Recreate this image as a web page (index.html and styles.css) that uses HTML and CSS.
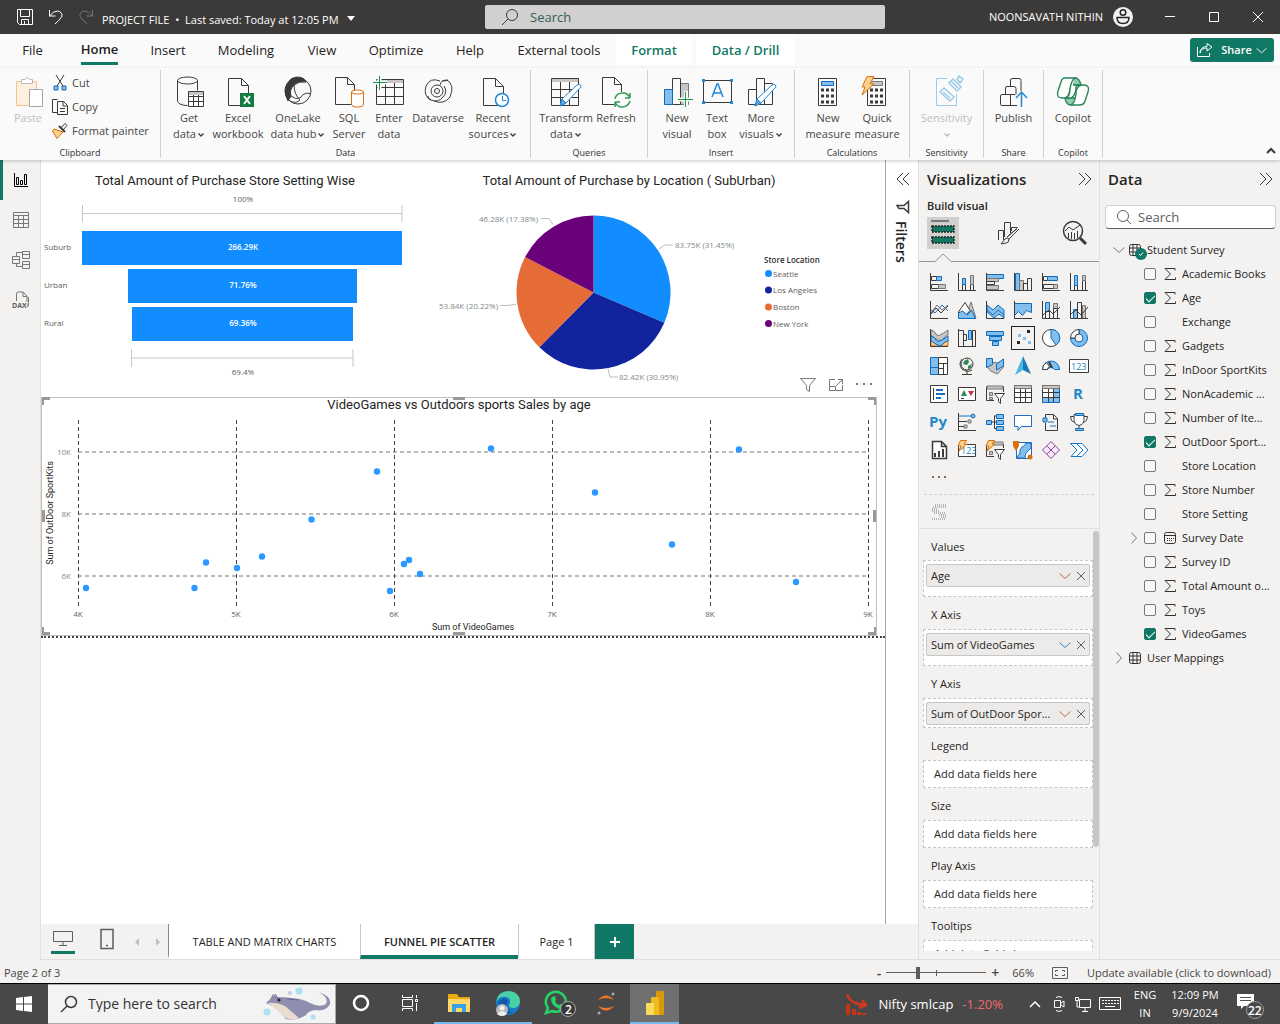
FILE: index.html
```html
<!DOCTYPE html>
<html lang="en">
<head>
<meta charset="utf-8">
<meta name="viewport" content="width=device-width, initial-scale=1">
<title>PROJECT FILE</title>
<link rel="stylesheet" href="styles.css">
</head>
<body>
<svg class="defs" aria-hidden="true">
  <symbol id="sigma" viewBox="0 0 12 12"><path d="M11 2.500V.5H1l5.500 5.500L1 11.500h10.500V9.500"/></symbol>
  <symbol id="table" viewBox="0 0 12 12"><rect x=".5" y=".5" width="11" height="11" rx="2"/><path d="M.5 4h11M.5 8h11M4 .5v11M8 .5v11"/></symbol>
  <symbol id="down" viewBox="0 0 12 12"><path d="M.5 3.500l5.500 5 5.500-5"/></symbol>
  <symbol id="right" viewBox="0 0 12 12"><path d="M3.500.5l5 5.500-5 5.500"/></symbol>
  <symbol id="close" viewBox="0 0 12 12"><path d="M2 2l8 8M10 2l-8 8"/></symbol>
  <symbol id="caret" viewBox="0 0 8 8"><path d="M1.500 2.500L4 5l2.500-2.500"/></symbol>
  <symbol id="axis" viewBox="0 0 20 20"><path d="M1.500 1v17.500H19"/></symbol>
  <symbol id="bolt" viewBox="0 0 20 20"><path d="M3.500.5h6L7 4h3L2 11l2-5H1z"/></symbol>
  <symbol id="page" viewBox="0 0 32 32"><path d="M2.500 2.500h12l7 7v20h-19zM14.500 2.500v7h7"/></symbol>
  <symbol id="pencil" viewBox="0 0 32 32"><path d="M12 24L27 10q3-2 4 1 0 1-1 2L16 28l-6 3z"/><path d="M10 31l2-7 4 4z" class="solid"/></symbol>
</svg>

<header class="titlebar">
  <div class="title-left">
    <svg width="16" height="16" class="lt"><path d="M.5.5h15v15h-13l-2-2zM3.500.5v7h9v-7M4.500 15.500v-5h7v5M7.500 12v3"/></svg>
    <svg width="14" height="16" class="lt"><path d="M.5 1v6h6M.5 7q4-5 8-5 5 1 4.500 5-.5 2-7 8"/></svg>
    <svg width="14" height="16" class="dim"><path d="M13.500 1v6h-6M13.500 7q-4-5-8-5-5 1-4.500 5 .5 2 7 8"/></svg>
    <button class="file-name">PROJECT FILE&nbsp; • &nbsp;Last saved: Today at 12:05 PM <i class="tri"></i></button>
  </div>
  <label class="title-search"><svg width="18" height="18" class="dk"><circle cx="11" cy="7" r="5.500"/><path d="M7 11L1 17"/></svg><input type="text" placeholder="Search" aria-label="Search"></label>
  <div class="title-right">
    <span class="user">NOONSAVATH NITHIN</span>
    <svg class="avatar" width="20" height="20"><circle cx="10" cy="10" r="10" fill="#f3f2f1"/><circle cx="10" cy="5.500" r="2.800"/><path d="M4 10.500h12q0 6-6 6t-6-6z"/></svg>
    <button class="win" aria-label="Minimize"><svg width="12" height="12" class="lt"><path d="M1 5.500h10"/></svg></button>
    <button class="win" aria-label="Maximize"><svg width="12" height="12" class="lt"><path d="M1.500 1.500h9v9h-9z"/></svg></button>
    <button class="win" aria-label="Close"><svg width="12" height="12" class="lt"><path d="M1 1l10 10M11 1L1 11"/></svg></button>
  </div>
</header>

<nav class="menu">
  <div class="menu-tabs">
    <button>File</button><button class="on"><span>Home</span></button><button>Insert</button><button>Modeling</button><button>View</button><button>Optimize</button><button>Help</button><button>External tools</button><button class="ctx">Format</button><button class="ctx">Data / Drill</button>
  </div>
  <button class="share"><svg width="16" height="14" class="lt"><path d="M.5 4v9.500h12V10M3 10q1-5 7-5V8l5-4-5-3.500v3Q3 4 3 10z"/></svg>Share<svg width="11" height="11" class="lt"><use href="#down"/></svg></button>
</nav>

<div class="ribbon">
  <section class="group g-clip">
    <div class="tools">
      <button class="big off"><svg width="32" height="32" viewBox="0 0 32 32"><path d="M4.500 6.500h20v24h-20z" fill="#fdf0dc" stroke="#efc68e"/><path d="M9.500 8.500v-4h4q1-4 4 0h3v4z" fill="#fff" stroke="#bbb"/><path d="M17.500 14.500h13v17h-13z" fill="#fff" stroke="#a6a6a6"/></svg>Paste</button>
      <div class="stack">
        <button><svg width="16" height="16" class="k"><path d="M4 0l7 11M12 0L5 11"/><path d="M2 11h4v4H2zM10 11h4v4h-4z" class="b"/></svg>Cut</button>
        <button><svg width="16" height="16" class="k"><path d="M5 13.500H.5v-13h5M5.500 2.500h6l4 4v9h-10zM11 3v4h4M8 9.500h5M8 12.500h5"/></svg>Copy</button>
        <button><svg width="16" height="16" class="k"><path d="M9 5l4-4.500 2 2L11 7z"/><path d="M2 6l9 3-6 6.500L.5 8z" fill="#fbd08d" stroke="#d8700b"/><path d="M7 3l6 6" stroke-width="2"/></svg>Format painter</button>
      </div>
    </div>
    <h3>Clipboard</h3>
  </section>
  <section class="group g-data">
    <div class="tools">
      <button class="big w48"><svg width="32" height="32" viewBox="0 0 32 32" class="k"><path d="M4.500 5.500v21q2 4 10 4M24.500 5.500v10"/><ellipse cx="14.500" cy="5.500" rx="10" ry="3.500"/><path d="M15.500 16.500h15v15h-15zM15.500 21.500h15M15.500 26.500h15M20.500 17v14M25.500 17v14" fill="#fff"/><path d="M16 17h14v3H16z" fill="#c8c6c4" stroke="none"/></svg>Get<span>data<svg width="8" height="8" class="car"><use href="#caret"/></svg></span></button>
      <button class="big w50"><svg width="32" height="32" viewBox="0 0 32 32" class="k"><path d="M6.500 3.500h13l7 7v20h-20zM19.500 3.500v7h7"/><path d="M18 18h14v14H18z" fill="#107c41" stroke="none"/><path d="M22 21l6 8M28 21l-6 8" stroke="#fff" stroke-width="2"/></svg>Excel<span>workbook</span></button>
      <button class="big w70"><svg width="32" height="32" viewBox="0 0 32 32" class="k"><circle cx="16" cy="16" r="13"/><path d="M9 4q7-4 13 0l2 3q-7-1-12 3-5 5-3 11l-3 5Q-1 13 9 4z" class="solid"/><path d="M12 10q0 9 6 15M9 21q5 4 9 2 5-7 11-4M18 25q-4 4-10 1" fill="none"/></svg>OneLake<span>data hub<svg width="8" height="8" class="car"><use href="#caret"/></svg></span></button>
      <button class="big w32"><svg width="32" height="32" viewBox="0 0 32 32" class="k"><use href="#page"/><path d="M18.500 17v12q0 3 6 3t6-3V17z" fill="#fff" stroke="#d8700b"/><ellipse cx="24.500" cy="17" rx="6" ry="2" fill="#fff" stroke="#d8700b"/></svg>SQL<span>Server</span></button>
      <button class="big w48"><svg width="32" height="32" viewBox="0 0 32 32" class="k"><path d="M3.500 4.500h27v25h-27zM3.500 12.500h27M3.500 21.500h27M12.500 8v21M21.500 8v21"/><path d="M4 5h26v3H4z" fill="#c8c6c4" stroke="none"/><path d="M6.500 0v16M-1 7.500h15" stroke="#fafafa" stroke-width="4"/><path d="M6.500 1v14M0 7.500h14" stroke="#159a49"/></svg>Enter<span>data</span></button>
      <button class="big w50"><svg width="32" height="32" viewBox="0 0 32 32" class="k"><circle cx="15" cy="16" r="6"/><circle cx="15" cy="16" r="2.500"/><path d="M18 6Q8 2 4 11q-3 10 5 14 7 3 12-3 5-5 1-11M12 26q10 4 16-4 5-12-3-17-6 0-7 5M6 21q0 4 3 4M20 6q4 0 6-1"/></svg>Dataverse</button>
      <button class="big w60"><svg width="32" height="32" viewBox="0 0 32 32" class="k"><path d="M6.500 3.500h12l8 8v19h-20zM18.500 3.500v8h8"/><circle cx="25" cy="25" r="6.500" fill="#fff" stroke="#2487d1" stroke-width="1.500"/><path d="M25.500 21v4.500H29" stroke="#2487d1"/></svg>Recent<span>sources<svg width="8" height="8" class="car"><use href="#caret"/></svg></span></button>
    </div>
    <h3>Data</h3>
  </section>
  <section class="group g-query">
    <div class="tools">
      <button class="big w54"><svg width="32" height="32" viewBox="0 0 32 32" class="k"><path d="M1.500 3.500h27v27h-27zM1.500 14.500h27M1.500 22.500h27M10.500 7v23M19.500 7v23"/><path d="M2 4h26v3H2z" fill="#c8c6c4" stroke="none"/><g class="pen"><use href="#pencil"/></g></svg>Transform<span>data<svg width="8" height="8" class="car"><use href="#caret"/></svg></span></button>
      <button class="big w46"><svg width="32" height="32" viewBox="0 0 32 32" class="k"><use href="#page"/><rect x="14" y="17" width="18" height="15" fill="#fafafa" stroke="none"/><path d="M15 24q1-6 8-6 5 0 7 5v-5m0 5h-5M30 26q-2 6-8 6-5 0-7-5v5m0-5h5" stroke="#2f9b57" stroke-width="1.500"/></svg>Refresh</button>
    </div>
    <h3>Queries</h3>
  </section>
  <section class="group g-insert">
    <div class="tools">
      <button class="big w40"><svg width="32" height="32" viewBox="0 0 32 32" class="k"><path d="M19.500 8.500h8v21h-8z" class="g"/><path d="M11.500 3.500h8v26h-8z"/><path d="M3.500 14.500h8v15h-8z" class="b"/><path d="M25 16v16M17 24.500h16" stroke="#fafafa" stroke-width="4"/><path d="M24.500 17v15M17 24.500h15" stroke="#159a49"/></svg>New<span>visual</span></button>
      <button class="big w40"><svg width="32" height="32" viewBox="0 0 32 32" class="k"><path d="M2.500 5.500h28v22h-28z"/><path d="M1 4h3v3H1zM29 4h3v3h-3zM1 26h3v3H1zM29 26h3v3h-3z" fill="#2487d1" stroke="none"/><path d="M11 22l5-13h1l5 13M13 18h7" stroke="#2487d1" stroke-width="1.500"/></svg>Text<span>box</span></button>
      <button class="big w48"><svg width="32" height="32" viewBox="0 0 32 32" class="k"><path d="M3.500 14.500h8v15h-8zM11.500 3.500h8v26h-8zM19.500 8.500h8v21h-8z"/><g class="pen"><use href="#pencil"/></g></svg>More<span>visuals<svg width="8" height="8" class="car"><use href="#caret"/></svg></span></button>
    </div>
    <h3>Insert</h3>
  </section>
  <section class="group g-calc">
    <div class="tools">
      <button class="big w50"><svg width="32" height="32" viewBox="0 0 32 32" class="k"><path d="M6.500 3.500h18v27h-18z"/><path d="M9.500 6.500h12v4h-12z" class="b"/><path d="M9 15h14M9 21h14M9 27h14" stroke-width="3" stroke-dasharray="3 2"/></svg>New<span>measure</span></button>
      <button class="big w48"><svg width="32" height="32" viewBox="0 0 32 32" class="k"><path d="M6.500 3.500h18v27h-18z"/><path d="M9.500 6.500h12v4h-12z" class="g"/><path d="M9 15h14M9 21h14M9 27h14" stroke-width="3" stroke-dasharray="3 2"/><path d="M6 1.500h7L9 9h4L1 20l3-8H1z" class="o"/></svg>Quick<span>measure</span></button>
    </div>
    <h3>Calculations</h3>
  </section>
  <section class="group g-sens">
    <div class="tools">
      <button class="big w70 off"><svg width="32" height="32" viewBox="0 0 32 32" fill="none" stroke="#9ccbe8"><path d="M16 3.500H5.500v27h20V19"/><path d="M9 17l4-4 10 9-4 4zM12 17l7 6M18 8l4-4 8 8-4 4zM20 6l7 7M26 4l2-3 4 3-3 4z" stroke-width="1.500"/></svg>Sensitivity<span><svg width="8" height="8" class="car"><use href="#caret"/></svg></span></button>
    </div>
    <h3>Sensitivity</h3>
  </section>
  <section class="group g-share">
    <div class="tools">
      <button class="big w54"><svg width="32" height="32" viewBox="0 0 32 32" class="k"><path d="M4 30.500q-1.500 0-1.500-1V21q0-1.500 1.500-1.500h8.500v11zM7.500 19v-6q0-1.500 1.500-1.500h7q2 0 2 2v6M12.500 11V5q0-1.500 1.500-1.500h7q2 0 2 2V16M12.500 19.500H17M12 30.500h7"/><path d="M23.500 32V17M18 23l5.500-6 5.500 6" stroke="#2487d1" stroke-width="1.500"/></svg>Publish</button>
    </div>
    <h3>Share</h3>
  </section>
  <section class="group g-copilot">
    <div class="tools">
      <button class="big w54"><svg width="34" height="32" viewBox="0 0 34 32" fill="#fff" stroke="#2a8659" stroke-width="1.400"><path d="M18 3q5-1 7 7h-8zM9 23q1 7 6 7t6-7z" fill="#93c9ad"/><path d="M9 3h10q-3 2-5 11-1 8-5 9H6q-6 0-4-7L5 7q1-4 4-4z"/><path d="M21 10h8q5 1 3 7l-3 9q-1 4-6 4h-8q4-2 5-11 0-8 6-9z"/><path d="M19 3q-4 3-5 11 0 8-5 9h6q5-3 5-11 1-2 2-2h-5"/></svg>Copilot</button>
    </div>
    <h3>Copilot</h3>
  </section>
  <button class="collapse" aria-label="Collapse ribbon"><svg width="10" height="10" class="k"><path d="M1 7l4-4 4 4" stroke-width="2"/></svg></button>
</div>

<main class="work">
  <nav class="rail">
    <button class="on" aria-label="Report view"><svg width="16" height="16"><path d="M1.500 1v13.500H15M3.500 5.500h2v7h-2zM7.500 8.500h2v4h-2zM11.500 2.500h2v10h-2z"/></svg></button>
    <button aria-label="Table view"><svg width="18" height="16"><path d="M1.500.5h15v15h-15zM1.500 3.500h15M1.500 7.500h15M1.500 11.500h15M6.500 3v12M11.500 3v12"/></svg></button>
    <button aria-label="Model view"><svg width="20" height="20"><path d="M1.500 6.500h7v7h-7zM1.500 9.500h7M11.500 1.500h7v7h-7zM11.500 4.500h7M11.500 11.500h7v7h-7zM11.500 14.500h7M5.500 6V2.500h6M5.500 14v2.500h6"/></svg></button>
    <button aria-label="DAX query view"><svg width="20" height="20"><path d="M5.500 11V4q0-2 2-2H12l4 4v9q0 2-2 2M12 2v4.500h4M17.500 7v8q0 2-2 2"/><text x="1" y="18" class="dax">DAX</text></svg></button>
  </nav>

  <div class="center">
    <div class="stage">
      <div class="report">
        <div class="top-row">
          <article class="visual funnel">
            <h2>Total Amount of Purchase Store Setting Wise</h2>
            <svg viewBox="41 192 400 205" class="chart">
              <path d="M83 213.500h319M82.500 205v17M402 205v17M131.500 358h222M131.500 349v18M353 349v18" class="bracket"/>
              <g fill="#118dff"><path d="M82 231h320v34H82zM128 269h229v34H128zM132 307h221v34H132z"/></g>
              <g class="s8" text-anchor="middle"><text x="243" y="202">100%</text><text x="243" y="375">69.4%</text></g>
              <g class="s8 white" text-anchor="middle"><text x="243" y="250">266.29K</text><text x="243" y="288">71.76%</text><text x="243" y="326">69.36%</text></g>
              <g class="s8"><text x="44" y="250">Suburb</text><text x="44" y="288">Urban</text><text x="44" y="326">Rural</text></g>
            </svg>
          </article>
          <article class="visual pie">
            <h2>Total Amount of Purchase by Location ( SubUrban)</h2>
            <svg viewBox="441 192 444 205" class="chart">
              <path d="M593.500 292.500v-77A77 77 0 0 1 664.300 322.800z" fill="#118dff"/>
              <path d="M593.500 292.500L664.300 322.800A77 77 0 0 1 539.400 347.300z" fill="#12239e"/>
              <path d="M593.500 292.500L539.400 347.300A77 77 0 0 1 525.100 257.100z" fill="#e66c37"/>
              <path d="M593.500 292.500L525.100 257.100A77 77 0 0 1 593.500 215.500z" fill="#6b007b"/>
              <path d="M541 218.500h8l4 6M659 249l6-4h8M500 305.500h7l9-1M608 369l2 8h8" fill="none" stroke="#bbb"/>
              <g class="s8 faint"><text x="538" y="222" text-anchor="end">46.28K (17.38%)</text><text x="675" y="248">83.75K (31.45%)</text><text x="498" y="309" text-anchor="end">53.84K (20.22%)</text><text x="619" y="380">82.42K (30.95%)</text></g>
              <text x="764" y="263" class="s8 strong">Store Location</text>
              <circle cx="768.500" cy="273.500" r="3.500" fill="#118dff"/><circle cx="768.500" cy="290" r="3.500" fill="#12239e"/><circle cx="768.500" cy="307" r="3.500" fill="#e66c37"/><circle cx="768.500" cy="323.500" r="3.500" fill="#6b007b"/>
              <g class="s8"><text x="773" y="277">Seattle</text><text x="773" y="293">Los Angeles</text><text x="773" y="310">Boston</text><text x="773" y="327">New York</text></g>
            </svg>
          </article>
        </div>
        <article class="visual scatter">
          <div class="vis-actions">
            <button aria-label="Filters on visual"><svg width="16" height="16"><path d="M.5 1.500h15l-6 7v6l-3-2v-4z"/></svg></button>
            <button aria-label="Focus mode"><svg width="16" height="16"><path d="M7 2.500H1.500v11h13V8M10 2.500h4.500V7M14.500 2.500L8 9M1.500 9.500h6v4"/></svg></button>
            <button aria-label="More options"><svg width="16" height="16"><path d="M0 7h2M7 7h2M14 7h2" stroke-width="2"/></svg></button>
          </div>
          <h2>VideoGames vs Outdoors sports Sales by age</h2>
          <svg viewBox="42 412 834 223" class="chart">
            <path d="M78 452h790M78 514h790M78 576h790" class="hgrid"/>
            <path d="M78.500 420v187M236.500 420v187M394.500 420v187M552.500 420v187M710.500 420v187M868.500 420v187" class="vgrid"/>
            <g class="s8 faint" text-anchor="end"><text x="71" y="455">10K</text><text x="71" y="517">8K</text><text x="71" y="579">6K</text></g>
            <g class="s8 axis" text-anchor="middle"><text x="78" y="617">4K</text><text x="236" y="617">5K</text><text x="394" y="617">6K</text><text x="552" y="617">7K</text><text x="710" y="617">8K</text><text x="868" y="617">9K</text></g>
            <text x="473" y="630" class="din" text-anchor="middle">Sum of VideoGames</text>
            <text transform="translate(53 513) rotate(-90)" class="din" text-anchor="middle">Sum of OutDoor SportKits</text>
            <g fill="#2b99ff"><circle cx="86" cy="588" r="3.200"/><circle cx="194.500" cy="588" r="3.200"/><circle cx="206" cy="562.500" r="3.200"/><circle cx="237" cy="568" r="3.200"/><circle cx="262" cy="556.500" r="3.200"/><circle cx="311.500" cy="519.500" r="3.200"/><circle cx="377" cy="471.500" r="3.200"/><circle cx="390" cy="591" r="3.200"/><circle cx="404" cy="564" r="3.200"/><circle cx="409" cy="560" r="3.200"/><circle cx="420" cy="574" r="3.200"/><circle cx="491" cy="448.500" r="3.200"/><circle cx="595" cy="492.500" r="3.200"/><circle cx="672" cy="544.500" r="3.200"/><circle cx="739" cy="449.500" r="3.200"/><circle cx="796" cy="582" r="3.200"/></g>
            <path d="M43.500 510v12M874.500 510v12M453 633.500h12" class="grip"/>
          </svg>
          <i class="corner tl"></i><i class="corner tr"></i><i class="corner bl"></i><i class="corner br"></i><i class="mid"></i>
        </article>
        <div class="page-edge"></div>
      </div>
      <aside class="filters">
        <button aria-label="Expand filters"><svg width="14" height="14" class="k"><path d="M7 1L1 7l6 6M13 1L7 7l6 6"/></svg></button>
        <svg width="14" height="14" class="k"><path d="M12.500 1.500v11L8 8.500H3l-2-3h7z" stroke-width="1.500"/></svg>
        <h2>Filters</h2>
      </aside>
    </div>
    <div class="pages">
      <div class="devices">
        <button class="on" aria-label="Desktop layout"><svg width="20" height="16" class="m"><path d="M.5 1.500h19v10H.5zM10 12v3M6 15.500h8"/></svg></button>
        <button class="phone" aria-label="Mobile layout"><svg width="14" height="22" class="m"><path d="M1 1.500h12v19H1zM6 17.500h2" stroke-width="1.500"/></svg></button>
        <button class="step" aria-label="Previous page"><svg width="6" height="10"><path d="M5 1v8L1 5z" fill="#c0bebc"/></svg></button>
        <button class="step" aria-label="Next page"><svg width="6" height="10"><path d="M1 1v8l4-4z" fill="#c0bebc"/></svg></button>
      </div>
      <button class="page p1">TABLE AND MATRIX CHARTS</button>
      <button class="page p2 on">FUNNEL PIE SCATTER</button>
      <button class="page p3">Page 1</button>
      <button class="add" aria-label="New page"><svg width="12" height="12"><path d="M6 1v10M1 6h10" stroke="#fff" stroke-width="2"/></svg></button>
    </div>
  </div>

  <aside class="viz">
    <header><h2>Visualizations</h2><button aria-label="Collapse"><svg width="14" height="14" class="k"><path d="M1 1l6 6-6 6M7 1l6 6-6 6"/></svg></button></header>
    <h3>Build visual</h3>
    <div class="modes">
      <button class="on" aria-label="Build"><svg width="24" height="26"><path d="M0 1h18" stroke="#252423"/><path d="M1 6h22v6H1zM1 17h22v6H1z" fill="#117865" stroke="#252423" stroke-width="1.500" stroke-dasharray="2 1"/></svg></button>
      <button aria-label="Format"><svg width="24" height="24" class="k"><path d="M1.500 19V9.500h5V19M7.500 16V1.500h6V12M14.500 10V6.500h6"/><path d="M22 8L12 18q0 4-3 4l-5 1 4-5q2-2 4 0M10 16L20 7.500z" fill="#f3f2f1"/></svg></button>
      <button aria-label="Analytics"><svg width="26" height="26" class="k"><circle cx="11" cy="11" r="9.500" stroke-width="1.500"/><path d="M18 18l6 6" stroke-width="3"/><path d="M3 11l4-4 4 3 7-5M6.500 13v5M9.500 12v7M12.500 13v6M15.500 11v7"/></svg></button>
    </div>
    <svg class="notch" viewBox="0 0 180 9" preserveAspectRatio="none"><path d="M0 8.500h16L24 1l8 7.500h148"/></svg>
    <div class="gallery">
      <button aria-label="Stacked bar chart"><svg><use href="#axis"/><path d="M2.500 4.500h5v4h-5zM2.500 12.500h7v4h-7z"/><path d="M7.500 4.500h5v4h-5z" class="b"/><path d="M9.500 12.500h7v4h-7z" class="g"/></svg></button>
      <button aria-label="Stacked column chart"><svg><use href="#axis"/><path d="M5.500 12.500h3v6h-3zM13.500 12.500h3v6h-3z"/><path d="M5.500 6.500h3v6h-3z" class="b"/><path d="M13.500 3.500h3v9h-3z" class="g"/></svg></button>
      <button aria-label="Clustered bar chart"><svg><path d="M1.500 2.500h17v4h-17z" class="b"/><path d="M1.500 6.500h12v3h-12z" class="g"/><path d="M1.500 9.500h8v3h-8z"/><path d="M1.500 13.500h12v4h-12z" class="g"/><use href="#axis"/></svg></button>
      <button aria-label="Clustered column chart"><svg><path d="M2.500 1.500h4v17h-4z" class="b"/><path d="M6.500 8.500h4v10h-4z" class="g"/><path d="M10.500 11.500h4v7h-4zM14.500 6.500h4v12h-4z"/><use href="#axis"/></svg></button>
      <button aria-label="100% stacked bar"><svg><use href="#axis"/><path d="M2.500 4.500h4v4h-4zM2.500 12.500h10v4h-10z"/><path d="M6.500 4.500h10v4h-10z" class="b"/><path d="M12.500 12.500h4v4h-4z" class="g"/></svg></button>
      <button aria-label="100% stacked column"><svg><use href="#axis"/><path d="M5.500 13.500h3v5h-3zM13.500 8.500h3v10h-3z"/><path d="M5.500 3.500h3v10h-3z" class="b"/><path d="M13.500 3.500h3v5h-3z" class="g"/></svg></button>

      <button aria-label="Line chart"><svg><use href="#axis"/><path d="M2 13l6-8 5 5 6-5" stroke="#797775"/><path d="M2 10l4 3 7-8 6 6" class="bl"/><path d="M2 14l5-6 5 5 7-7"/></svg></button>
      <button aria-label="Area chart"><svg><path d="M8 18L14 2l5 16z" class="g"/><path d="M1.500 12L8 2.500l5 8-7 8H2z" fill="#fff"/><path d="M1.500 18.500V13l4-2 5 4 4-5 4 8.500z" class="b"/></svg></button>
      <button aria-label="Stacked area chart"><svg><path d="M2 5l6 5 5-5 6 5v8l-5-4-5 4-7-6z" class="b"/><path d="M2 10l6 5 5-5 6 5" class="bl"/><use href="#axis"/></svg></button>
      <button aria-label="100% stacked area"><svg><path d="M1.500 3.500h17v9l-5-2-4 5-4-4-4 4z" class="b"/><use href="#axis"/></svg></button>
      <button aria-label="Line and stacked column"><svg><path d="M4.500 2.500h4v9h-4z" class="b"/><path d="M12.500 3.500h4v5h-4z" class="g"/><path d="M4.500 11.500h4v7h-4zM12.500 8.500h4v10h-4zM2 15l6-5 4 4 7-7"/><use href="#axis"/></svg></button>
      <button aria-label="Line and clustered column"><svg><path d="M4.500 9.500h4v9h-4z" class="b"/><path d="M13.500 5.500h3v13h-3z" class="g"/><path d="M8.500 2.500h4v16h-4zM2 14l5-4 5 5 7-8"/><use href="#axis"/></svg></button>

      <button aria-label="Ribbon chart"><svg><path d="M2 12v6h17v-6l-5 4H7z" class="o"/><path d="M2 2q4 1 5 4t6 0 6-4v5q-3 1-5 4t-7 0-5-4z" class="g"/><path d="M2 8q4 1 5 4t6 0 6-4v5q-3 0-5 3t-7 0-5-3z" class="b"/><use href="#axis"/></svg></button>
      <button aria-label="Waterfall chart"><svg><use href="#axis"/><path d="M1.500 2.500h5v16h-5zM6.500 6.500h3v6h-3zM15.500 2.500h3v16h-3z"/><path d="M11.500 2.500h3v9h-3z" class="b"/></svg></button>
      <button aria-label="Funnel chart"><svg><path d="M1.500 3.500h17v4h-17zM4.500 8.500h12v4h-12zM7.500 13.500h6v4h-6z" class="b"/></svg></button>
      <button class="sel" aria-label="Scatter chart"><svg><path d="M14 2h3v3h-3zM4 13h3v3H4z" fill="#252423" stroke="none"/><path d="M5 6h3v3H5zM10 9h3v3h-3zM15 13h3v3h-3z" fill="#83beec" stroke="none"/></svg></button>
      <button aria-label="Pie chart"><svg><circle cx="10" cy="10" r="8.500" fill="#fff"/><path d="M10 10V1.500A8.500 8.500 0 0 1 15 17z" class="b"/></svg></button>
      <button aria-label="Donut chart"><svg><path d="M10 1.500a8.500 8.500 0 1 1-8.500 8.500H6a4 4 0 1 0 4-4z" class="b"/><path d="M1.500 10A8.500 8.500 0 0 1 10 1.500V6a4 4 0 0 0-4 4z" fill="#fff"/></svg></button>

      <button aria-label="Treemap"><svg><path d="M1.500 1.500h8v17h-8z" class="b"/><path d="M1.500 11.500h8" class="bl"/><path d="M9.500 1.500h9v17h-9zM9.500 7.500h9M14.500 7.500v11M9.500 12.500h5" fill="#fff"/></svg></button>
      <button aria-label="Map"><svg><circle cx="10" cy="8" r="6"/><path d="M5 3q-4 5 0 10 5 4 10 1M10 15v3M5 18.500h10"/><path d="M7 5l4-2 1 3-2 3-4-1zM11 10l4-2-1 4-3 1z" fill="#31885a" stroke="none"/></svg></button>
      <button aria-label="Filled map"><svg><path d="M1.500 5l5 1 6 1 6-2v6l-6 7-7-3-4-5z" class="g"/><path d="M1.500 2.500h6v6l-6 3zM11.500 8l7-5v7l-7 4z" class="b"/></svg></button>
      <button aria-label="Azure map"><svg><path d="M10 0l8 18-8-4z" fill="#1c79b7" stroke="none"/><path d="M10 0L2 19l8-5z" fill="#4ab8e0" stroke="none"/></svg></button>
      <button aria-label="Gauge"><svg><path d="M1.500 13.500a8.500 8.500 0 0 1 17 0h-5a4 4 0 0 0-7 0z" class="b"/><path d="M1.500 13.500q0-5 4-7l3 4q-2 1-2 3z" fill="#fff"/><path d="M11 12L8 6" stroke-width="2"/></svg></button>
      <button aria-label="Card"><svg><path d="M.5 3.500h19v13H.5z" fill="#fff"/><text x="2" y="14" class="t9">123</text></svg></button>

      <button aria-label="Multi-row card"><svg><path d="M1.500 1.500h17v17h-17z" fill="#fff"/><path d="M4.500 4v12"/><path d="M7 6h7M7 10h9M7 14h5" stroke="#1a6fc4" stroke-width="2"/></svg></button>
      <button aria-label="KPI"><svg><path d="M1.500 3.500h17v13h-17z" fill="#fff"/><path d="M4 12l3-6 3 6z" fill="#31885a" stroke="none"/><path d="M11 7h6l-3 5z" fill="#d13438" stroke="none"/><path d="M4 14.500h3"/></svg></button>
      <button aria-label="Slicer"><svg><path d="M9 16.500H1.500v-14h17V8"/><path d="M2 2h16v3H2z" class="g"/><path d="M4.500 8.500h3v3h-3zM4.500 13.500h3v2h-3z" class="g"/><path d="M9.500 9.500h10l-4 5v5l-2-2v-3z" fill="#fff"/></svg></button>
      <button aria-label="Table"><svg><path d="M1.500 1.500h17v17h-17zM1.500 8.500h17M1.500 13.500h17M7.500 5v13M12.500 5v13" fill="#fff"/><path d="M1.500 1.500h17v3h-17z" class="g"/></svg></button>
      <button aria-label="Matrix"><svg><path d="M1.500 1.500h17v17h-17z" fill="#fff"/><path d="M12.500 4.500h6v14h-17v-5h11z" class="b"/><path d="M1.500 8.500h17M1.500 13.500h17M7.500 5v13M12.500 5v13"/><path d="M1.500 1.500h17v3h-17z" class="g"/></svg></button>
      <button aria-label="R visual"><svg><text x="4" y="15" class="t15">R</text></svg></button>

      <button aria-label="Python visual"><svg><text x="0" y="15" class="t15">Py</text></svg></button>
      <button aria-label="Key influencers"><svg><use href="#axis"/><path d="M2 4h12" class="bl"/><circle cx="16" cy="4" r="2" class="b"/><path d="M2 9.500h8M2 14.500h5"/><path d="M11 8h3v3h-3zM7 13h3v3H7z" class="g"/></svg></button>
      <button aria-label="Decomposition tree"><svg><path d="M6 10h5M9.500 3.500v13H12M9.500 4H12"/><path d="M1.500 8.500h5v4h-5zM11.500 2.500h7v4h-7zM11.500 8.500h7v4h-7zM11.500 14.500h7v4h-7z" class="b"/></svg></button>
      <button aria-label="Q&amp;A"><svg><path d="M1.500 3.500h17v11H8l-3 4v-4H1.500z" fill="#fff" stroke="#1a6fc4"/></svg></button>
      <button aria-label="Narrative"><svg><path d="M4.500 6V2.500h8l4 4v12h-12V11M12.500 3v4h4"/><path d="M7 10h6M9 14h6" class="bl"/><path d="M2 6h4v4H2z" class="b"/></svg></button>
      <button aria-label="Goals"><svg><path d="M5 2.500h10v5q0 5-5 6-5-1-5-6zM5 4.500H1.500q0 5 4 6M15 4.500h3.500q0 5-4 6M10 14v3" fill="#fff"/><path d="M6.500 1.500h8v2h-8zM6.500 16.500h8v2h-8z" class="b"/></svg></button>

      <button aria-label="Paginated report"><svg><path d="M3.500 1.500h9l5 5v12h-14zM12.500 1.500v5h5" fill="#fff" stroke-width="1.500"/><path d="M6 13v4M10 11v6M14 9v8" stroke-width="2"/></svg></button>
      <button aria-label="Card (new)"><svg><path d="M1.500 4.500h17v12h-17z" fill="#fff"/><text x="4" y="14" class="t9">123</text><use href="#bolt" class="o"/></svg></button>
      <button aria-label="Slicer (new)"><svg><path d="M9 16.500H1.500v-12h17V8"/><path d="M8 2h10v3H8z" class="g"/><path d="M4.500 11.500h3v3h-3z" class="g"/><path d="M9.500 9.500h10l-4 5v5l-2-2v-3z" fill="#fff"/><use href="#bolt" class="o"/></svg></button>
      <button aria-label="ArcGIS map"><svg><path d="M3.500 2.500h15v16h-15z" fill="#fff" stroke="#1a6fc4"/><path d="M13 3q-1 3-4 4-3 3-2 6-2 2-3 5h8q0-5 3-7l3-3V3z" fill="#83beec" stroke="#1a6fc4"/><path d="M0 1h6v5l-3 5-3-5z" fill="#d8700b" stroke="none"/><circle cx="17" cy="17" r="2.500" fill="#d8700b" stroke="none"/></svg></button>
      <button aria-label="Power Apps"><svg><path d="M10 1.500l8.500 8.500-8.500 8.500L1.500 10zM6 6l8 8M14 6l-8 8" stroke="#8f3f9c" fill="#f6eaf8"/></svg></button>
      <button aria-label="Power Automate"><svg><path d="M1.500 3.500H13l6 6.500-6 6.500H2L8 10zM8 4l6 6-6 6" stroke="#0f78d4" fill="#fff"/></svg></button>
    </div>
    <button class="more-vis" aria-label="Get more visuals"><svg width="18" height="4"><path d="M2 2h2M8 2h2M14 2h2" stroke="#8a6a42" stroke-width="2"/></svg></button>
    <div class="custom"><button aria-label="Custom visual"><svg width="16" height="18"><path d="M4 2h11M2 4h13M1 6h5M1 8h7M3 10h11M8 12h7M10 14h5M1 16h13" stroke="#7a7876" stroke-dasharray="1 1"/></svg></button></div>
    <div class="wells">
      <section class="h37"><h4>Values</h4><div class="well"><div class="chip"><span>Age</span><button aria-label="Options"><svg class="rust"><use href="#down"/></svg></button><button aria-label="Remove"><svg><use href="#close"/></svg></button></div></div></section>
      <section class="h37"><h4>X Axis</h4><div class="well"><div class="chip"><span>Sum of VideoGames</span><button aria-label="Options"><svg class="blue"><use href="#down"/></svg></button><button aria-label="Remove"><svg><use href="#close"/></svg></button></div></div></section>
      <section class="h30"><h4>Y Axis</h4><div class="well"><div class="chip"><span>Sum of OutDoor Spor...</span><button aria-label="Options"><svg class="rust"><use href="#down"/></svg></button><button aria-label="Remove"><svg><use href="#close"/></svg></button></div></div></section>
      <section><h4>Legend</h4><div class="well">Add data fields here</div></section>
      <section><h4>Size</h4><div class="well">Add data fields here</div></section>
      <section><h4>Play Axis</h4><div class="well">Add data fields here</div></section>
      <section><h4>Tooltips</h4><div class="well">Add data fields here</div></section>
      <i class="thumb"></i>
    </div>
  </aside>

  <aside class="data">
    <header><h2>Data</h2><button aria-label="Collapse"><svg width="14" height="14" class="k"><path d="M1 1l6 6-6 6M7 1l6 6-6 6"/></svg></button></header>
    <label class="find"><svg width="16" height="16" class="m"><circle cx="7" cy="7" r="5.500"/><path d="M11 11l4 4"/></svg><input type="text" placeholder="Search" aria-label="Search fields"></label>
    <ul>
      <li class="tbl"><svg class="tw"><use href="#down"/></svg><span class="ti"><svg><use href="#table"/></svg><i class="badge"><svg width="6" height="6"><path d="M1 3l1.500 1.500L5 1.500" stroke="#fff"/></svg></i></span>Student Survey</li>
      <li><label><i></i><input type="checkbox"><svg><use href="#sigma"/></svg>Academic Books</label></li>
      <li><label><i></i><input type="checkbox" checked><svg><use href="#sigma"/></svg>Age</label></li>
      <li><label><i></i><input type="checkbox"><svg></svg>Exchange</label></li>
      <li><label><i></i><input type="checkbox"><svg><use href="#sigma"/></svg>Gadgets</label></li>
      <li><label><i></i><input type="checkbox"><svg><use href="#sigma"/></svg>InDoor SportKits</label></li>
      <li><label><i></i><input type="checkbox"><svg><use href="#sigma"/></svg>NonAcademic ...</label></li>
      <li><label><i></i><input type="checkbox"><svg><use href="#sigma"/></svg>Number of Ite...</label></li>
      <li><label><i></i><input type="checkbox" checked><svg><use href="#sigma"/></svg>OutDoor Sport...</label></li>
      <li><label><i></i><input type="checkbox"><svg></svg>Store Location</label></li>
      <li><label><i></i><input type="checkbox"><svg><use href="#sigma"/></svg>Store Number</label></li>
      <li><label><i></i><input type="checkbox"><svg></svg>Store Setting</label></li>
      <li><label><i><svg class="tw"><use href="#right"/></svg></i><input type="checkbox"><svg><rect x=".5" y=".5" width="11" height="11" rx="2"/><path d="M.5 3.500h11"/><path d="M3 6.500h7M3 8.500h5" stroke-dasharray="1 1"/></svg>Survey Date</label></li>
      <li><label><i></i><input type="checkbox"><svg><use href="#sigma"/></svg>Survey ID</label></li>
      <li><label><i></i><input type="checkbox"><svg><use href="#sigma"/></svg>Total Amount o...</label></li>
      <li><label><i></i><input type="checkbox"><svg><use href="#sigma"/></svg>Toys</label></li>
      <li><label><i></i><input type="checkbox" checked><svg><use href="#sigma"/></svg>VideoGames</label></li>
      <li class="tbl"><svg class="tw"><use href="#right"/></svg><span class="ti"><svg><use href="#table"/></svg></span>User Mappings</li>
    </ul>
  </aside>
</main>

<footer class="status">
  <span>Page 2 of 3</span>
  <div class="zoom"><b>-</b><input type="range" min="10" max="400" value="132" aria-label="Zoom"><b>+</b><span>66%</span>
    <button aria-label="Fit to page"><svg width="16" height="12" class="m"><path d="M.5.5h15v11H.5zM3.500 5V3.500H6M10 3.500h2.500V5M3.500 7v1.500H6M10 8.500h2.500V7"/></svg></button></div>
  <a href="#update">Update available (click to download)</a>
</footer>

<div class="taskbar">
  <button class="start" aria-label="Start"><svg width="16" height="16"><path d="M0 2l7-1v6.500H0zM8 1l8-1v7.500H8zM0 8.500h7V15l-7-1zM8 8.500h8V16l-8-1z" fill="#fff"/></svg></button>
  <label class="win-search"><svg width="18" height="18" class="k"><circle cx="11" cy="7" r="5.500" stroke-width="1.500"/><path d="M7 11l-6 6" stroke-width="1.500"/></svg><input type="text" placeholder="Type here to search" aria-label="Type here to search">
    <svg width="68" height="36" viewBox="0 0 68 36"><path d="M3 17q5-4 7-9l4 3q8 0 15 1 12 1 18 5 10 5 16 1 3-6-7-12 13 5 11 12-4 8-15 6-7 1-9 5-9 6-20 4L15 24Q9 19 3 17z" fill="#8f8eaf"/><path d="M5 17q9-1 17 3l14 12q-8 3-15-1-6-7-16-14z" fill="#e9dccf"/><path d="M12 8l4 6M24 13l12 1" stroke="#676594"/><circle cx="16" cy="14" r="1.500" fill="#222"/><circle cx="36" cy="5" r="3.500" fill="#a9e1ee"/><circle cx="4" cy="26" r="3.500" fill="#a9e1ee"/><circle cx="50" cy="31" r="2.500" fill="#a9e1ee"/><circle cx="27" cy="7" r="2" fill="#c7c7f2"/></svg></label>
  <div class="apps">
    <button aria-label="Cortana"><svg width="18" height="18"><circle cx="9" cy="9" r="7" fill="none" stroke="#fff" stroke-width="2.500"/></svg></button>
    <button aria-label="Task view"><svg width="18" height="18" class="lt"><path d="M1.500 5.500h10v7h-10zM1.500 1v2.500h10V1M1.500 17v-2.500h10V17M15.500 1v3M15.500 9v8M14.500 5.500h2v2h-2z"/></svg></button>
    <button class="run" aria-label="File Explorer"><svg width="24" height="20"><path d="M1 1h9l2 3h11v15H1z" fill="#e8a90c"/><path d="M1 6h22v13H1z" fill="#ffd868"/><path d="M5 11h14v8h-4v-4H9v4H5z" fill="#3aa0e8"/></svg></button>
    <button class="run" aria-label="Edge"><svg width="26" height="26"><circle cx="13" cy="13" r="12" fill="#1679c9"/><path d="M1 12Q3 1 14 1q11 1 11 11-1 6-8 6-5-1-2-5 1-5-4-6-6-1-10 5z" fill="#4ad0a5"/><path d="M4 11q6-5 9 0-4 7 4 12-9 3-14-5z" fill="#1557a2"/><circle cx="7" cy="20" r="6" fill="#b9b9bd"/><circle cx="7" cy="18" r="2.500" fill="#eee"/><path d="M2 24q5-6 10 0-5 4-10 0z" fill="#eee"/></svg></button>
    <button aria-label="WhatsApp"><svg width="30" height="28"><path d="M4 24l2-5A10 10 0 1 1 10 22z" fill="none" stroke="#25d366" stroke-width="2.500"/><path d="M10 8l3-1 1 4-1 1q1 3 4 4l2-1 3 2q-2 4-5 3-7-3-8-9 0-2 1-3z" fill="#25d366"/><circle cx="26" cy="20" r="7.500" fill="#3a3a3a" stroke="#aaa"/><text x="23" y="25" class="count">2</text></svg></button>
    <button aria-label="Jupyter"><svg width="20" height="24"><path d="M2 9q8-9 16 0-8-4-16 0zM2 15q8 9 16 0-8 4-16 0z" fill="#f37726"/><circle cx="17" cy="3" r="1.500" fill="#aaa"/><circle cx="3" cy="22" r="1.500" fill="#aaa"/></svg></button>
    <button class="run cur" aria-label="Power BI"><svg width="20" height="24"><rect x="11" width="8" height="24" rx="1" fill="#d9970b"/><rect x="6" y="6" width="8" height="18" rx="1" fill="#edbd20"/><rect x="1" y="12" width="8" height="12" rx="1" fill="#f9dc5c"/></svg></button>
  </div>
  <div class="tray">
    <a href="#nifty" class="stock"><svg width="24" height="24"><path d="M2 2q2 8 12 10l7 1M17 8l4 5-7 3" fill="none" stroke="#d6371c" stroke-width="2.500"/><path d="M3 12v11M9 17v6M14 20v3M19 21v2" stroke="#c23616" stroke-width="4"/></svg><span>Nifty smlcap</span><em>-1.20%</em></a>
    <button aria-label="Show hidden icons"><svg width="12" height="12" class="lt"><path d="M1 9l5-5 5 5" stroke-width="1.500"/></svg></button>
    <button aria-label="Meet now"><svg width="14" height="18" class="lt"><path d="M2.500 5.500h6v7h-6zM9 8l3-2v6l-3-2M4 2.500q3-2 6 0M4 15.500q3 2 6 0"/></svg></button>
    <button aria-label="Network"><svg width="18" height="16" class="lt"><path d="M1.500 1.500h3v3h-3zM3 5v6h2M5.500 3.500h11v8h-11zM11 12v3M8 15.500h6"/></svg></button>
    <button class="kb" aria-label="Keyboard"><svg width="22" height="14" class="lt"><path d="M.5.5h21v12H.5z"/><path d="M3 3.500h17M3 6.500h17" stroke-dasharray="2 1"/><path d="M6 9.500h10"/></svg></button>
    <span class="lang">ENG<br>IN</span>
    <time>12:09 PM<br>9/9/2024</time>
    <button class="note" aria-label="Notifications"><svg width="30" height="28"><path d="M2 4h17v12H9l-3 3v-3H2z" fill="#fff"/><path d="M5 7.500h11M5 10.500h11" stroke="#555"/><circle cx="20" cy="20" r="8.500" fill="#484848" stroke="#999"/><text x="13" y="25" class="count">22</text></svg></button>
  </div>
</div>
</body>
</html>
```
FILE: styles.css
```css
* { box-sizing: border-box; }
body {
  margin: 0; height: 100vh; display: flex; flex-direction: column; overflow: hidden;
  font: 11px/16px "Open Sans", "Noto Sans", sans-serif; color: #252423; background: #fff;
}
button { font: inherit; color: inherit; border: 0; background: none; padding: 0; margin: 0; display: flex; align-items: center; justify-content: center; white-space: nowrap; }
h2, h3, h4, ul { margin: 0; padding: 0; font-weight: 400; list-style: none; }
input { font: inherit; color: inherit; }
input[type="text"] { border: 0; background: none; outline: 0; padding: 0; flex: 1; min-width: 0; }
svg { display: block; flex: none; overflow: visible; }
.defs { position: absolute; width: 0; height: 0; }
.k { fill: none; stroke: #3b3a39; }
.lt { fill: none; stroke: #fff; }
.dk { fill: none; stroke: #3b3a39; }
.dim { fill: none; stroke: #777; }
.m { fill: none; stroke: #605e5c; }
.solid { fill: #3b3a39; }
.b { fill: #83beec; stroke: #0f6cbd; }
.g { fill: #c8c6c4; stroke: #797775; }
.o { fill: #fbd08d; stroke: #d8700b; }
.bl { fill: none; stroke: #1a6fc4; }
.pen { fill: #fff; stroke: #2487d1; }
#pencil .solid { fill: #5ba7dc; }

/* title bar */
.titlebar { flex: none; height: 34px; background: #3b3a39; color: #fff; display: grid; grid-template-columns: 485fr 400fr 395fr; align-items: center; }
.title-left { display: flex; align-items: center; gap: 16px; padding-left: 17px; }
.file-name { margin-left: -7px; padding-top: 6px; }
.tri { border: 4px solid transparent; border-top: 5px solid #fff; border-bottom: 0; margin: 0 0 4px 8px; }
.title-search { height: 24px; background: #d2d0ce; border-radius: 2px; display: flex; align-items: center; gap: 11px; padding-left: 16px; font-size: 13px; }
.title-search input::placeholder { color: #2f5f55; opacity: 1; }
.title-right { display: flex; justify-content: flex-end; align-items: center; height: 34px; }
.avatar { margin: 0 15px 0 10px; fill: none; stroke: #252423; stroke-width: 1.5; }
.avatar circle:first-child { stroke: none; }
.win { width: 44px; height: 34px; }

/* menu */
.menu { flex: none; height: 34px; background: #fafafa; display: flex; align-items: flex-start; justify-content: space-between; padding-right: 6px; font-size: 13px; }
.menu-tabs { display: grid; grid-template-columns: 65px 69px 68px 88px 64px 84px 64px 114px 76px 99px; height: 31px; }
.menu-tabs button:last-child { margin-left: 4px; margin-right: -4px; }
.menu-tabs .on { font-weight: 600; }
.menu-tabs .on span { border-bottom: 3px solid #117865; height: 31px; line-height: 31px; }
.menu-tabs .ctx { background: #fff; color: #117865; font-weight: 600; }
.share { width: 84px; height: 24px; margin-top: 4px; border-radius: 3px; background: #117865; color: #fff; gap: 4px; font-size: 11px; font-weight: 600; }
.share svg:first-child { margin-right: 4px; }

/* ribbon */
.ribbon { flex: none; height: 92px; background: #fafafa; display: flex; position: relative; z-index: 1; color: #484644; box-shadow: 0 1px 3px rgba(0,0,0,.22); }
.group { display: flex; flex-direction: column; border-right: 1px solid #d2d0ce; margin: 2px 0; }
.tools { display: flex; flex: 1; justify-content: center; padding-top: 5px; }
.group h3 { font-size: 9px; line-height: 10px; text-align: center; color: #323130; }
.g-clip { width: 161px; }
.g-clip .tools { justify-content: flex-start; padding-left: 10px; }
.g-data { width: 370px; } .g-query { width: 117px; } .g-insert { width: 147px; } .g-calc { width: 115px; }
.g-data .tools { padding-right: 3px; }
.g-sens { width: 74px; } .g-share { width: 60px; } .g-copilot { width: 59px; }
.big { flex-direction: column; justify-content: flex-start; width: 36px; }
.big > svg { margin-bottom: 3px; }
.big span { display: flex; align-items: center; height: 16px; }
.car { fill: none; stroke: currentColor; stroke-width: 1.5; margin: 2px 0 0 1px; }
.off { color: #c0bebc; }
.w32 { width: 32px; } .w40 { width: 40px; } .w46 { width: 46px; } .w48 { width: 48px; } .w50 { width: 50px; }
.w54 { width: 54px; } .w60 { width: 60px; } .w70 { width: 70px; }
.stack { display: flex; flex-direction: column; margin: -4px 0 0 6px; }
.stack button { height: 24px; justify-content: flex-start; gap: 4px; }
.collapse { margin: auto 4px 4px auto; }

/* work area */
.work { flex: 1; min-height: 0; display: flex; }
.rail { width: 41px; background: #f3f2f1; border-right: 1px solid #e1dfdd; }
.rail button { width: 40px; height: 40px; border-left: 3px solid transparent; padding-right: 2px; }
.rail button.on { border-color: #117865; }
.rail svg { fill: none; stroke: #797775; }
.rail .on svg { stroke: #000; }
.dax { font-size: 7px; font-weight: 700; fill: #605e5c; stroke: #f3f2f1; stroke-width: 2px; paint-order: stroke; }
.center { flex: 1; min-width: 0; display: flex; flex-direction: column; }
.stage { flex: 1; min-height: 0; display: flex; }
.report { flex: 1; min-width: 0; }
.top-row { display: grid; grid-template-columns: 400fr 444fr; }
.visual h2 { font: 13px/16px Roboto, sans-serif; text-align: center; color: #252423; white-space: nowrap; }
.funnel h2 { padding: 13px 32px 3px 0; }
.pie h2 { padding: 13px 68px 3px 0; }
.chart { width: 100%; height: auto; }
.bracket { stroke: #c8c8c8; fill: none; }
.s8 { font-size: 8px; fill: #605e5c; }
.strong { font-weight: 600; fill: #323130; }
.white { fill: #fff; font-weight: 600; }
.faint { fill: #7f8c8d; }
.din { font: 9px Roboto, sans-serif; fill: #252423; }
.hgrid { stroke: #777; stroke-dasharray: 4 3; }
.vgrid { stroke: #444; stroke-dasharray: 4 3; }
.visual.scatter { position: relative; border: 1px solid #c0c0c0; margin-right: 8px; }
.visual.scatter h2 { line-height: 14px; }
.grip { stroke: #999; stroke-width: 3; }
.corner { position: absolute; width: 8px; height: 8px; border: 0 solid #999; }
.tl { top: -1px; left: 0; border-width: 3px 0 0 2px; }
.tr { top: -1px; right: 0; border-width: 3px 2px 0 0; }
.bl.corner { bottom: 0; left: 0; border-width: 0 0 3px 2px; }
.br { bottom: 0; right: 0; border-width: 0 2px 3px 0; }
.mid { position: absolute; top: -1px; left: 50%; width: 12px; height: 3px; margin-left: -6px; background: #999; }
.vis-actions { position: absolute; right: 4px; top: -21px; display: flex; gap: 12px; }
.vis-actions svg { fill: none; stroke: #797775; }
.page-edge { border-top: 2px dotted #444; }
.filters { width: 33px; border-left: 1px solid #a6a6a6; display: flex; flex-direction: column; align-items: center; padding: 12px 0 0 2px; gap: 14px; }
.filters h2 { writing-mode: vertical-rl; font-size: 14px; font-weight: 600; line-height: 18px; margin: -7px 4px 0 0; }

/* page tabs */
.pages { flex: none; height: 36px; background: #f3f2f1; display: flex; border-bottom: 1px solid #e1dfdd; }
.devices { width: 127px; display: flex; padding-left: 10px; align-items: stretch; }
.devices button { flex: none; width: 24px; }
.devices .on { border-bottom: 3px solid #117865; margin: 0 20px 5px 0; }
.devices .phone { padding-bottom: 5px; margin-right: 15px; }
.devices .step { width: 6px; margin-right: 15px; }
.page { background: #fff; border-left: 1px solid #c8c6c4; border-bottom: 4px solid #fff; padding-top: 5px; }
.page.on { font-weight: 600; border-bottom-color: #117865; }
.p1 { width: 192px; border-left-color: #8a8886; } .p2 { width: 158px; } .p3 { width: 76px; }
.add { width: 40px; background: #117865; border-left: 1px solid #c8c6c4; }

/* visualizations pane */
.viz, .data { width: 181px; background: #f3f2f1; border-left: 1px solid #e1dfdd; display: flex; flex-direction: column; border-bottom: 1px solid #e1dfdd; }
.viz header, .data header { display: flex; justify-content: space-between; padding: 8px 7px 8px 8px; }
header h2 { font-size: 15px; line-height: 22px; font-weight: 600; }
.viz h3 { font-size: 11px; font-weight: 600; padding: 0 8px; line-height: 16px; }
.modes { display: flex; justify-content: space-between; padding: 3px 8px 0; }
.modes button { width: 32px; height: 32px; }
.modes .on { background: #d2d0ce; }
.notch { width: 100%; height: 9px; margin-top: 4px; fill: none; stroke: #979593; }
.gallery { display: grid; grid-template-columns: repeat(6, 28px); grid-auto-rows: 28px; padding: 6px 0 0 6px; }
.gallery svg { width: 20px; height: 20px; fill: none; stroke: #3b3a39; }
.gallery .sel svg { outline: 1px solid #252423; outline-offset: 1px; }
.t9 { font-size: 9px; fill: #1a7fc4; stroke: none; }
.t15 { font-size: 15px; font-weight: 700; fill: #2487c7; stroke: none; }
.more-vis { height: 26px; margin: 0 auto 0 11px; }
.custom { border-top: 1px dashed #d2d0ce; margin: 4px 5px 0; height: 34px; display: flex; padding-left: 7px; }
.wells { flex: 1; min-height: 0; overflow: hidden; position: relative; border-top: 1px solid #e1dfdd; margin-bottom: 8px; padding: 0 6px 0 4px; }
.wells section { display: flex; flex-direction: column; }
.wells h4 { height: 32px; padding: 6px 0 0 8px; line-height: 24px; }
.wells section:first-child h4 { height: 31px; }
.well { height: 28px; background: #fff; border: 1px dashed #c8c6c4; line-height: 26px; padding-left: 10px; }
.h37 .well { height: 37px; } .h30 .well { height: 30px; }
.h37 .well, .h30 .well { padding: 3px 2px; }
.chip { display: flex; align-items: center; height: 23px; background: #edebe9; border: 1px solid #c8c6c4; padding-left: 4px; border-radius: 2px; line-height: 20px; }
.chip span { flex: 1; white-space: nowrap; }
.chip button { width: 16px; }
.chip svg { width: 12px; height: 12px; fill: none; stroke: #605e5c; }
.chip .rust { stroke: #b5714a; } .chip .blue { stroke: #3a86c8; }
.thumb { position: absolute; right: 0; top: 2px; width: 6px; height: 316px; border-radius: 3px; background: #c8c6c4; }

/* data pane */
.find { height: 24px; margin: 7px 4px 9px 5px; background: #fff; border: 1px solid #d2d0ce; border-bottom-color: #605e5c; border-radius: 4px; display: flex; align-items: center; gap: 6px; padding-left: 10px; font-size: 13px; }
.find input::placeholder { color: #605e5c; opacity: 1; }
.data li, .data li label { display: flex; align-items: center; height: 24px; white-space: nowrap; }
.data li svg { width: 12px; height: 12px; fill: none; stroke: #323130; }
.data li label i { width: 12px; margin: 0 4px 0 28px; }
.data li label > svg { margin: 0 6px 0 8px; }
.data li .tw { stroke: #797775; }
.tbl { padding-left: 13px; }
.ti { position: relative; margin: 0 6px 0 4px; }
.badge { position: absolute; left: 6px; top: 4px; width: 12px; height: 12px; border-radius: 50%; background: #117865; display: flex; align-items: center; justify-content: center; }
.data li .badge svg { width: 6px; height: 6px; stroke: #fff; }
input[type="checkbox"] { appearance: none; width: 12px; height: 12px; margin: 0; border: 1px solid #797775; border-radius: 2px; background: #f8f8f8; display: block; flex: none; }
input[type="checkbox"]:checked { background: #117865; border-color: #117865; }
input[type="checkbox"]:checked::before { content: ""; display: block; width: 8px; height: 4px; margin: 2px 1px; border: solid #fff; border-width: 0 0 1px 1px; transform: rotate(-45deg); }

/* status bar */
.status { flex: none; height: 23px; background: #f3f2f1; color: #484644; display: flex; align-items: center; padding: 2px 4px 0; }
.zoom { margin-left: auto; display: flex; align-items: center; }
.zoom b { font-size: 14px; font-weight: 600; }
.zoom span { margin: 0 18px 0 13px; }
.status a { color: inherit; text-decoration: none; margin-left: 14px; width: 194px; text-align: center; }
.zoom input { appearance: none; width: 100px; height: 12px; margin: 0 5px; background: linear-gradient(#605e5c, #605e5c) center / 100% 1px no-repeat, linear-gradient(#605e5c, #605e5c) 50% 50% / 1px 6px no-repeat; }
.zoom input::-webkit-slider-thumb { appearance: none; width: 4px; height: 12px; background: #605e5c; }

/* taskbar */
.taskbar { flex: none; height: 41px; background: #484848; border-top: 1px solid #000; color: #fff; display: flex; font-size: 13px; }
.start { width: 48px; }
.win-search { width: 288px; background: #f3f3f3; border: 1px solid #aaa; border-width: 1px 1px 1px 0; display: flex; align-items: center; gap: 10px; padding: 0 4px 0 12px; color: #252423; font-size: 14px; }
.win-search input::placeholder { color: #333; opacity: 1; }
.apps { display: flex; }
.apps button { width: 49px; border-bottom: 2px solid transparent; }
.apps .run { border-bottom-color: #76b9ed; }
.apps .cur { background: #707070; }
.count { font: 600 12px "Open Sans", sans-serif; fill: #fff; }
.tray { margin-left: auto; display: flex; align-items: center; }
.tray > button { width: 24px; }
.tray .kb { width: 30px; }
.stock { display: flex; align-items: center; gap: 9px; color: #fff; text-decoration: none; margin-right: 20px; }
.stock em { font-style: normal; color: #f1696c; }
.lang, time { text-align: center; font-size: 11px; line-height: 18px; }
.lang { width: 40px; } time { width: 60px; }
.tray .note { width: 50px; margin-right: 5px; }
```
